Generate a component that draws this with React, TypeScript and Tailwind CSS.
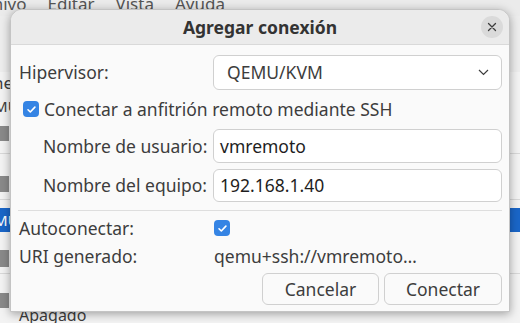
import { useState } from "react";

const font = { fontFamily: '"Noto Sans", "Open Sans", sans-serif' };

const VmIcon = ({ top }: { top: string }) => (
    <div className={`ml-[-4px] h-[15px] w-[13px] bg-[#8a8a8a] ${top}`} />
)

const Check = () => (
    <span className="flex h-[16px] w-[16px] shrink-0 items-center justify-center rounded-[4px] bg-[#3584e4]">
        <svg width="11" height="11" viewBox="0 0 12 12" fill="none">
            <path d="M2.2 6.3l2.5 2.4 5-5.3" stroke="white" strokeWidth="1.8" strokeLinecap="round" strokeLinejoin="round" />
        </svg>
    </span>
)

const App = () => {
    const [sshOn] = useState(true)
    const [autoConnect] = useState(true)

    return (
        <div className="relative h-[323px] w-[520px] overflow-hidden bg-[#f3f3f3]" style={font}>
            {/* app window behind the dialog */}
            <div className="flex h-[16px] items-start gap-[21px] bg-[#ebebeb] text-[17px] leading-[8px] text-[#555]">
                <span className="-ml-[33px]">Archivo</span>
                <span>Editar</span>
                <span>Vista</span>
                <span>Ayuda</span>
            </div>
            <div className="flex flex-col text-[#3d3d3d]">
                <div className="h-[56px] bg-[#ededed]" />
                <div className="h-[22px] -ml-[28px] text-[17px] leading-[22px]">Conexiones</div>
                <div className="h-[24px] -ml-[26px] text-[15px] leading-[24px]">QEMU/KVM</div>
                <div className="flex h-[36px] items-start border-b border-[#d8d8d8] pt-[8px]"><VmIcon top="" /></div>
                <div className="flex h-[46px] items-start border-b border-[#d8d8d8] pt-[22px]"><VmIcon top="h-[16px]" /></div>
                <div className="h-[8px]" />
                <div className="flex h-[24px] items-center -ml-[26px] bg-[#1a66c8] text-[15px] text-white">QEMU/KVM remoto</div>
                <div className="flex h-[42px] items-start border-b border-[#d8d8d8] pt-[18px]"><VmIcon top="h-[17px]" /></div>
                <div className="flex h-[19px] items-start pt-[19px]"><VmIcon top="" /></div>
                <div className="pl-[19px] pt-[12px] text-[16px] leading-[20px]">Apagado</div>
            </div>

            {/* dialog window */}
            <div className="absolute left-[10px] top-[9px] flex h-[303px] w-[500px] flex-col overflow-hidden rounded-t-[12px] border border-[#c4c4c4] bg-[#fafafa] text-[#3d3d3d] shadow-[0_2px_10px_rgba(0,0,0,0.35)]">
                <div className="relative flex h-[35px] shrink-0 items-center justify-center border-b border-[#d9d9d9] bg-[#ebebeb]">
                    <span className="text-[17.5px] font-bold text-[#333]">Agregar conexión</span>
                    <button className="absolute right-[6px] top-[6px] flex h-[22px] w-[22px] items-center justify-center rounded-full bg-[#dadada]">
                        <svg width="10" height="10" viewBox="0 0 10 10">
                            <path d="M1.5 1.5l7 7M8.5 1.5l-7 7" stroke="#3d3d3d" strokeWidth="1.3" strokeLinecap="round" />
                        </svg>
                    </button>
                </div>

                <div className="flex flex-col px-[7px] pt-[10px] text-[17.5px]">
                    <div className="flex h-[35px] items-center">
                        <span className="w-[195px] pl-[1px]">Hipervisor:</span>
                        <div className="flex h-full flex-1 items-center justify-between rounded-[6px] border border-[#d0d0d0] bg-white pl-[13px] pr-[12px]">
                            <span>QEMU/KVM</span>
                            <svg width="11" height="7" viewBox="0 0 11 7" fill="none">
                                <path d="M1 1l4.5 4.5L10 1" stroke="#3d3d3d" strokeWidth="1.2" />
                            </svg>
                        </div>
                    </div>

                    <div className="mt-[11px] flex h-[16px] items-center gap-[5px] pl-[5px]">
                        {sshOn && <Check />}
                        <span className="whitespace-nowrap">Conectar a anfitrión remoto mediante SSH</span>
                    </div>

                    <div className="mt-[12px] flex h-[34px] items-center">
                        <span className="w-[195px] pl-[25px]">Nombre de usuario:</span>
                        <div className="flex h-full flex-1 items-center rounded-[6px] border border-[#d0d0d0] bg-white pl-[6px] text-[#1e1e1e]">vmremoto</div>
                    </div>
                    <div className="mt-[6px] flex h-[33px] items-center">
                        <span className="w-[195px] pl-[25px]">Nombre del equipo:</span>
                        <div className="flex h-full flex-1 items-center rounded-[6px] border border-[#d0d0d0] bg-white pl-[6px] text-[#1e1e1e]">192.168.1.40</div>
                    </div>

                    <div className="mt-[8px] h-px bg-[#dedede]" />

                    <div className="mt-[8px] flex h-[18px] items-center">
                        <span className="w-[196px] pl-[1px]">Autoconectar:</span>
                        {autoConnect && <Check />}
                    </div>
                    <div className="mt-[10px] flex h-[18px] items-center">
                        <span className="w-[196px] pl-[1px]">URI generado:</span>
                        <span>qemu+ssh://vmremoto…</span>
                    </div>

                    <div className="mt-[8px] flex justify-end gap-[5px]">
                        <button className="h-[32px] w-[117px] rounded-[6px] border border-[#d0d0d0] bg-[#fafafa]">Cancelar</button>
                        <button className="h-[32px] w-[118px] rounded-[6px] border border-[#d0d0d0] bg-[#fafafa]">Conectar</button>
                    </div>
                </div>
            </div>
        </div>
    )
}
export default App;
